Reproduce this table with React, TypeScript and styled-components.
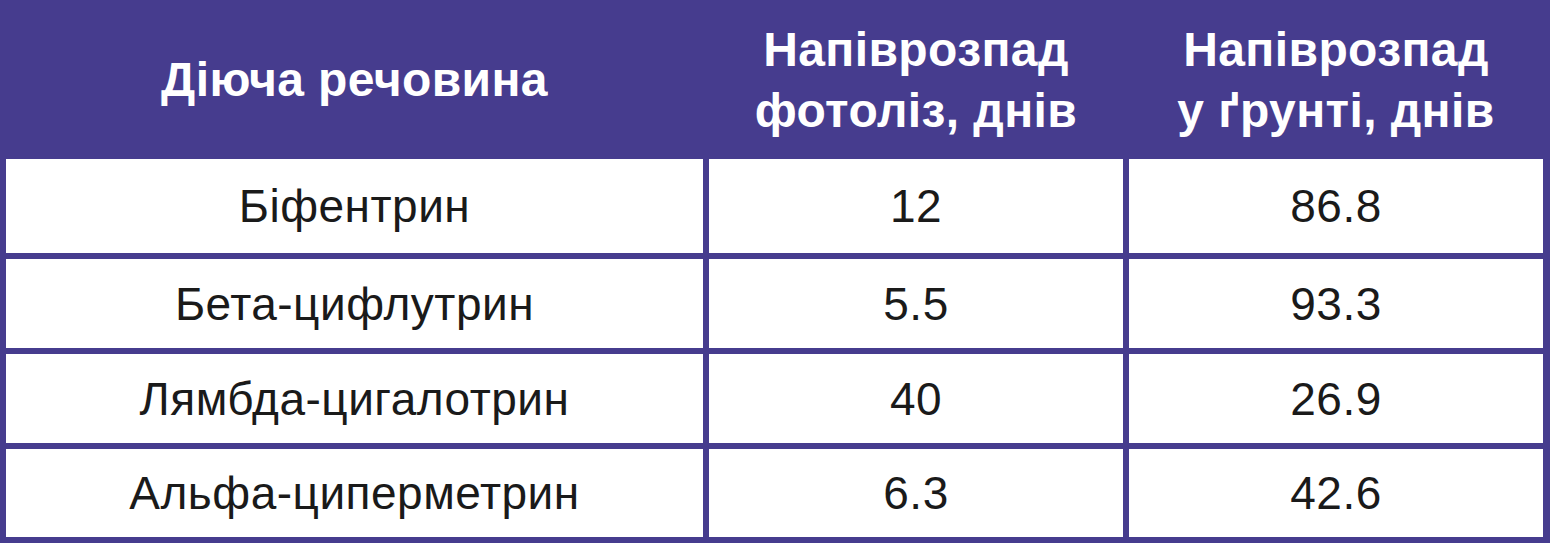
import styled, { createGlobalStyle } from "styled-components"

const GlobalStyle = createGlobalStyle`
    html, body {
        margin: 0;
        padding: 0;
        background: #ffffff;
    }
    body {
        font-family: "Liberation Sans", Arial, sans-serif;
    }
`

const purple = '#463c8e'

const Table = styled.div({
    width: 1550,
    height: 543,
    boxSizing: 'border-box',
    backgroundColor: purple,
    padding: '0 7px 6px 6px',
    display: 'grid',
    gridTemplateColumns: '697px 414px 414px',
    gridTemplateRows: '153px 94px 89px 89px 88px',
    columnGap: 6,
    rowGap: 6,
})

const HeadCell = styled.div({
    display: 'flex',
    alignItems: 'center',
    justifyContent: 'center',
    textAlign: 'center',
    paddingTop: 6,
    color: '#ffffff',
    fontWeight: 700,
    fontSize: 48,
    letterSpacing: 0.4,
    lineHeight: '61px',
})

const Cell = styled.div({
    display: 'flex',
    alignItems: 'center',
    justifyContent: 'center',
    backgroundColor: '#ffffff',
    color: '#1a1a1a',
    fontSize: 46,
    letterSpacing: 0.5,
})

const rows = [
    ['Біфентрин', '12', '86.8'],
    ['Бета-цифлутрин', '5.5', '93.3'],
    ['Лямбда-цигалотрин', '40', '26.9'],
    ['Альфа-циперметрин', '6.3', '42.6'],
]

function App(): JSX.Element {
    return (
        <>
            <GlobalStyle />
            <Table>
                <HeadCell>Діюча речовина</HeadCell>
                <HeadCell>Напіврозпад<br />фотоліз, днів</HeadCell>
                <HeadCell>Напіврозпад<br />у ґрунті, днів</HeadCell>
                {rows.map(row => row.map((value, i) => (
                    <Cell key={row[0] + i}>{value}</Cell>
                )))}
            </Table>
        </>
    )
}

export default App
